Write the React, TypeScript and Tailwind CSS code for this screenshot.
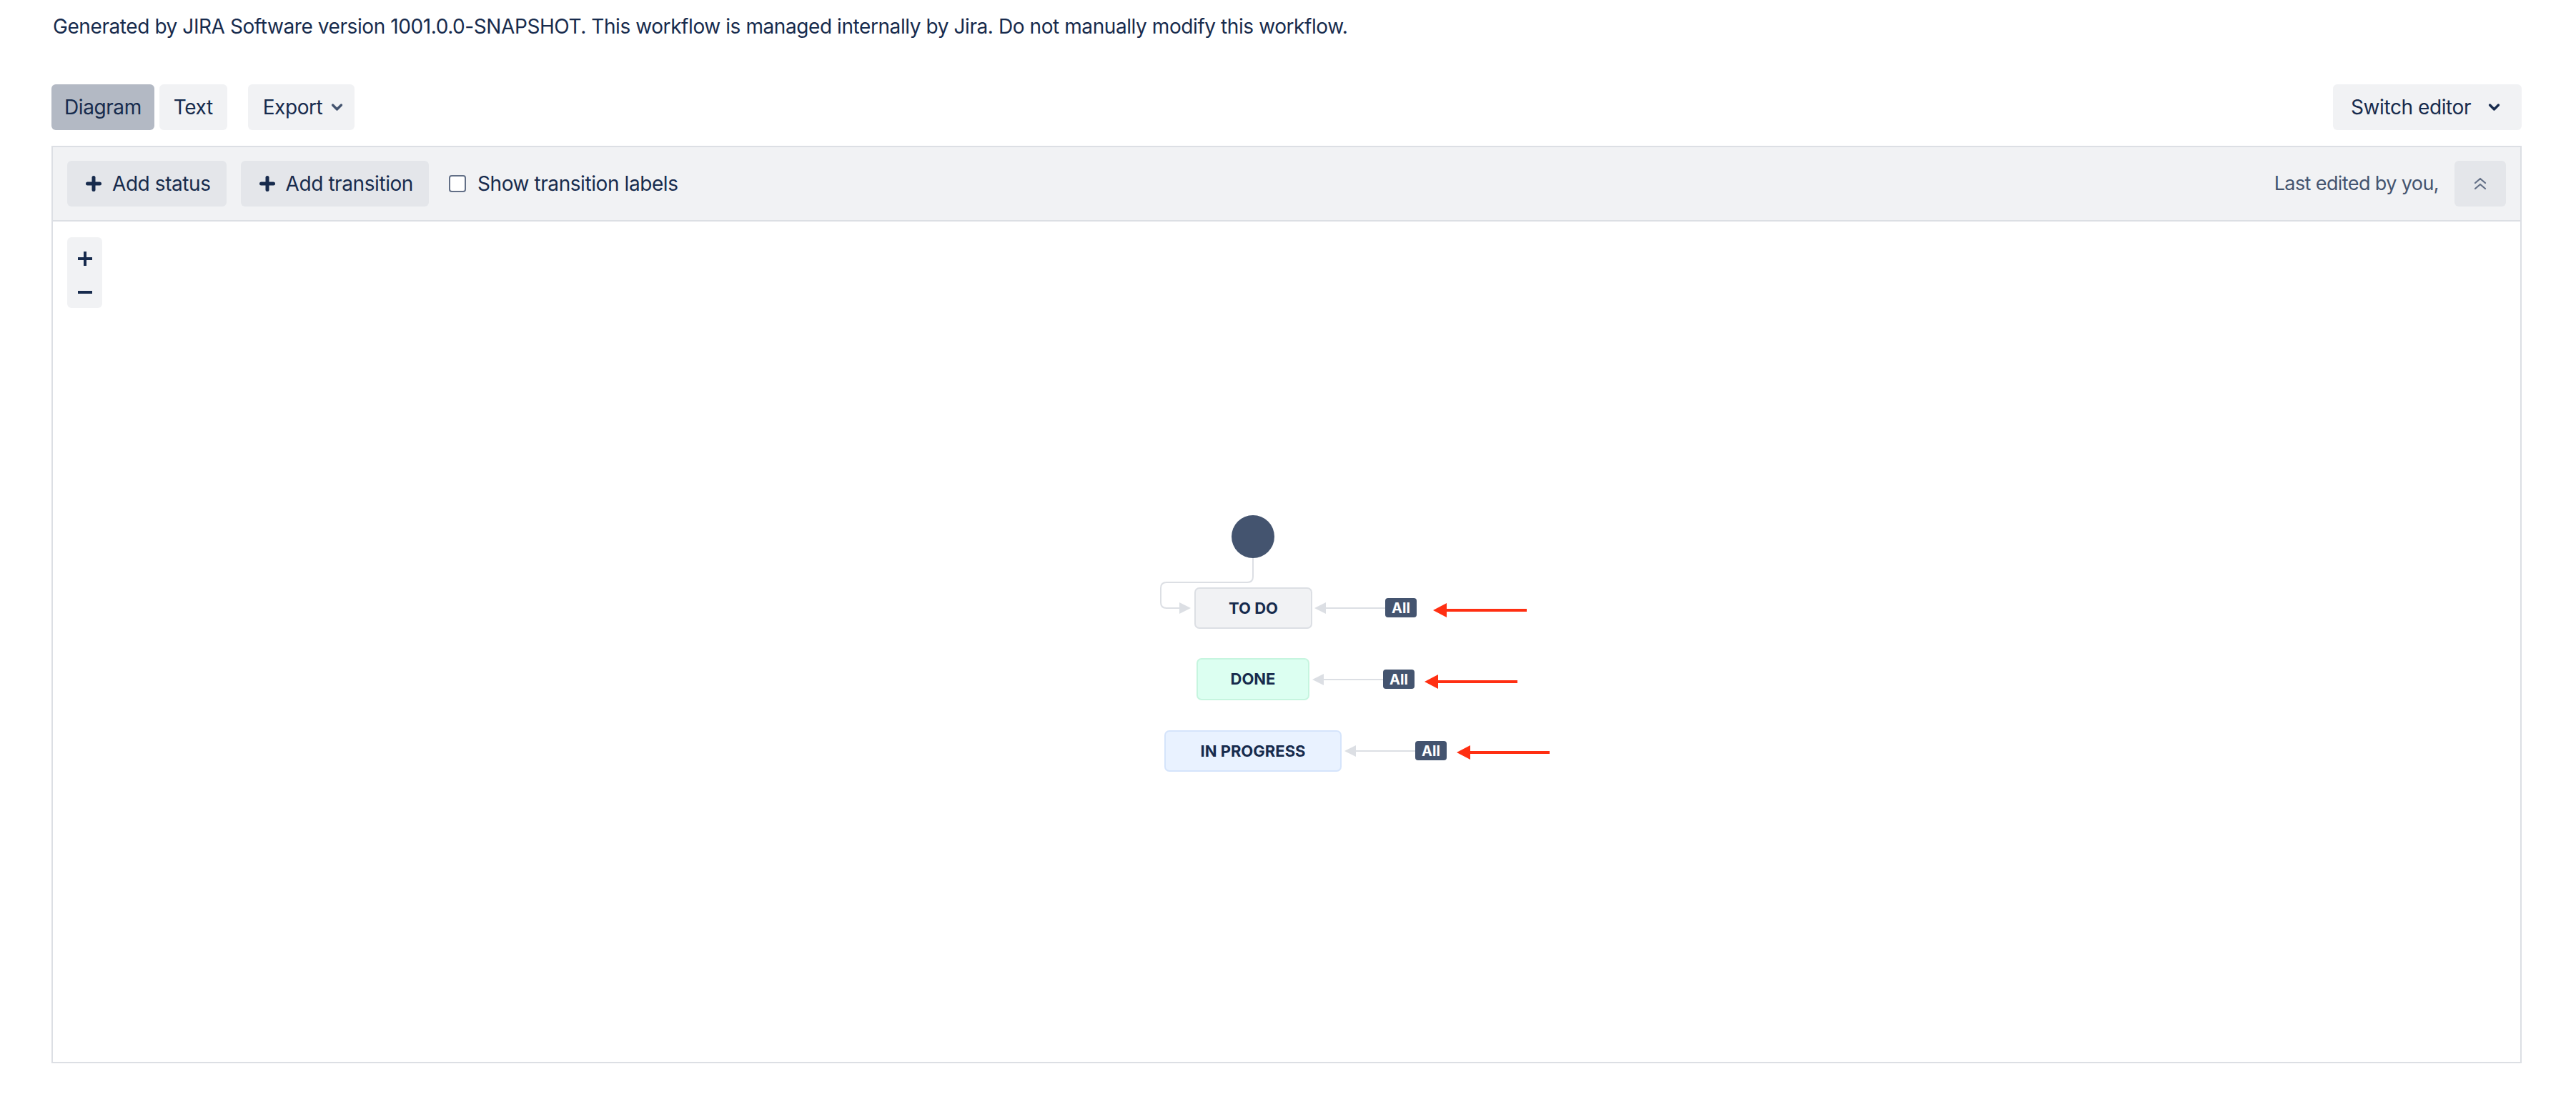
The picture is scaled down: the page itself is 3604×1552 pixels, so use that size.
import React from "react";

const font = { fontFamily: "Inter, 'Noto Sans', sans-serif" };

// canvas origin in page pixels
const OX = 74;
const OY = 310;

function Chevron({ className }: { className?: string }) {
  return (
    <svg viewBox="0 0 20 14" className={className} fill="none" stroke="currentColor" strokeWidth={4} strokeLinecap="round" strokeLinejoin="round">
      <path d="M3 3.5 10 10.5 17 3.5" />
    </svg>
  );
}

function AddIcon() {
  return (
    <svg viewBox="0 0 22 22" className="w-[22px] h-[22px]" fill="#172b4d">
      <rect x="0" y="8.5" width="22" height="5" rx="2.5" />
      <rect x="8.5" y="0" width="5" height="22" rx="2.5" />
    </svg>
  );
}

function Status({ label, left, top, w, h, cls }: { label: string; left: number; top: number; w: number; h: number; cls: string }) {
  return (
    <div
      className={`absolute flex items-center justify-center rounded-[7px] border-2 text-[22px] font-bold tracking-normal text-[#172b4d] ${cls}`}
      style={{ left: left - OX, top: top - OY, width: w, height: h }}
    >
      {label}
    </div>
  );
}

function Badge({ left, top }: { left: number; top: number }) {
  return (
    <div
      className="absolute flex items-center justify-center rounded-[4px] bg-[#44546f] text-[20px] font-bold leading-none tracking-normal text-white"
      style={{ left: left - OX, top: top - OY, width: 44, height: 27 }}
    >
      All
    </div>
  );
}

function Transition({ tip, from, y }: { tip: number; from: number; y: number }) {
  return (
    <g>
      <line x1={tip + 14} y1={y} x2={from} y2={y} stroke="#dcdfe4" strokeWidth={2} />
      <polygon points={`${tip},${y} ${tip + 16},${y - 8} ${tip + 16},${y + 8}`} fill="#dcdfe4" />
    </g>
  );
}

function RedArrow({ tip, end, y }: { tip: number; end: number; y: number }) {
  return (
    <g>
      <line x1={tip + 16} y1={y} x2={end} y2={y} stroke="#ff2f12" strokeWidth={4} />
      <polygon points={`${tip},${y} ${tip + 19},${y - 10} ${tip + 19},${y + 10}`} fill="#ff2f12" />
    </g>
  );
}

export default function App() {
  return (
    <div className="min-h-screen bg-white pl-[72px] pr-[76px] text-[#172b4d] tracking-[-0.42px]" style={font}>
      <p className="pt-[17px] pl-[2px] text-[28px] leading-[40px]">
        Generated by JIRA Software version 1001.0.0-SNAPSHOT. This workflow is managed internally by Jira. Do not manually modify this workflow.
      </p>

      <div className="mt-[61px] flex h-[64px] items-center">
        <div className="flex gap-[7px]">
          <button className="h-[64px] rounded-[6px] bg-[#b3b9c4] px-[18px] text-[28px]">Diagram</button>
          <button className="h-[64px] rounded-[6px] bg-[#f1f2f4] px-[20px] text-[28px]">Text</button>
        </div>
        <button className="ml-[29px] flex h-[64px] items-center gap-[12px] rounded-[6px] bg-[#f1f2f4] pl-[21px] pr-[16px] text-[28px]">
          Export
          <Chevron className="w-[17px] h-[12px] text-[#44546f]" />
        </button>
        <button className="ml-auto flex h-[64px] items-center gap-[24px] rounded-[6px] bg-[#f1f2f4] pl-[25px] pr-[30px] text-[28px]">
          Switch editor
          <Chevron className="w-[17px] h-[12px] text-[#172b4d]" />
        </button>
      </div>

      <div className="mt-[22px] border-2 border-[#dcdfe4]">
        <div className="flex h-[104px] items-center border-b-2 border-[#dcdfe4] bg-[#f1f2f4] px-[20px]">
          <button className="flex h-[64px] items-center gap-[15px] rounded-[6px] bg-[#e4e6ea] pl-[26px] pr-[22px] text-[28px]">
            <AddIcon />
            Add status
          </button>
          <button className="ml-[20px] flex h-[64px] items-center gap-[15px] rounded-[6px] bg-[#e4e6ea] pl-[26px] pr-[22px] text-[28px]">
            <AddIcon />
            Add transition
          </button>
          <label className="ml-[28px] flex items-center gap-[16px] text-[28px]">
            <span className="h-[24px] w-[24px] rounded-[4px] border-2 border-[#626f86] bg-white" />
            Show transition labels
          </label>
          <span className="ml-auto text-[27px] tracking-[-0.6px] text-[#44546f]">Last edited by you,</span>
          <button className="ml-[22px] flex h-[64px] w-[72px] items-center justify-center rounded-[6px] bg-[#e4e6ea]">
            <svg viewBox="0 0 18 18" className="w-[18px] h-[18px]" fill="none" stroke="#626f86" strokeWidth={2.2} strokeLinecap="round" strokeLinejoin="round">
              <path d="M2 8 9 2 16 8" />
              <path d="M2 16 9 10 16 16" />
            </svg>
          </button>
        </div>

        <div className="relative h-[1176px] overflow-hidden bg-white">
          <div className="absolute left-[20px] top-[22px] flex w-[49px] flex-col rounded-[6px] bg-[#f1f2f4]">
            <button className="flex h-[60px] items-center justify-center">
              <svg viewBox="0 0 20 20" className="w-[20px] h-[20px]" fill="#172b4d">
                <rect x="0" y="8" width="20" height="4" />
                <rect x="8" y="0" width="4" height="20" />
              </svg>
            </button>
            <button className="flex h-[39px] items-start justify-center pt-[15px]">
              <svg viewBox="0 0 20 4" className="w-[20px] h-[4px]" fill="#172b4d">
                <rect x="0" y="0" width="20" height="4" />
              </svg>
            </button>
          </div>

          <svg className="absolute inset-0 h-full w-full">
            <g transform={`translate(${-OX} ${-OY})`}>
              <circle cx={1753} cy={751} r={30} fill="#44546f" />
              <path
                d="M1753 781 V807 Q1753 815 1745 815 H1632 Q1624 815 1624 823 V843 Q1624 851 1632 851 H1652"
                fill="none"
                stroke="#dcdfe4"
                strokeWidth={2}
              />
              <polygon points="1666,851 1650,843 1650,859" fill="#dcdfe4" />

              <Transition tip={1839} from={1938} y={851} />
              <Transition tip={1836} from={1935} y={951} />
              <Transition tip={1881} from={1980} y={1051} />

              <RedArrow tip={2005} end={2136} y={854} />
              <RedArrow tip={1993} end={2123} y={954} />
              <RedArrow tip={2038} end={2168} y={1053} />
            </g>
          </svg>

          <Status label="TO DO" left={1671} top={822} w={165} h={58} cls="bg-[#f1f2f4] border-[#dcdfe4]" />
          <Status label="DONE" left={1674} top={921} w={158} h={59} cls="bg-[#dcfff1] border-[#c6f5df]" />
          <Status label="IN PROGRESS" left={1629} top={1022} w={248} h={58} cls="bg-[#e9f2ff] border-[#d5e4fb]" />

          <Badge left={1938} top={837} />
          <Badge left={1935} top={937} />
          <Badge left={1980} top={1037} />
        </div>
      </div>
    </div>
  );
}
